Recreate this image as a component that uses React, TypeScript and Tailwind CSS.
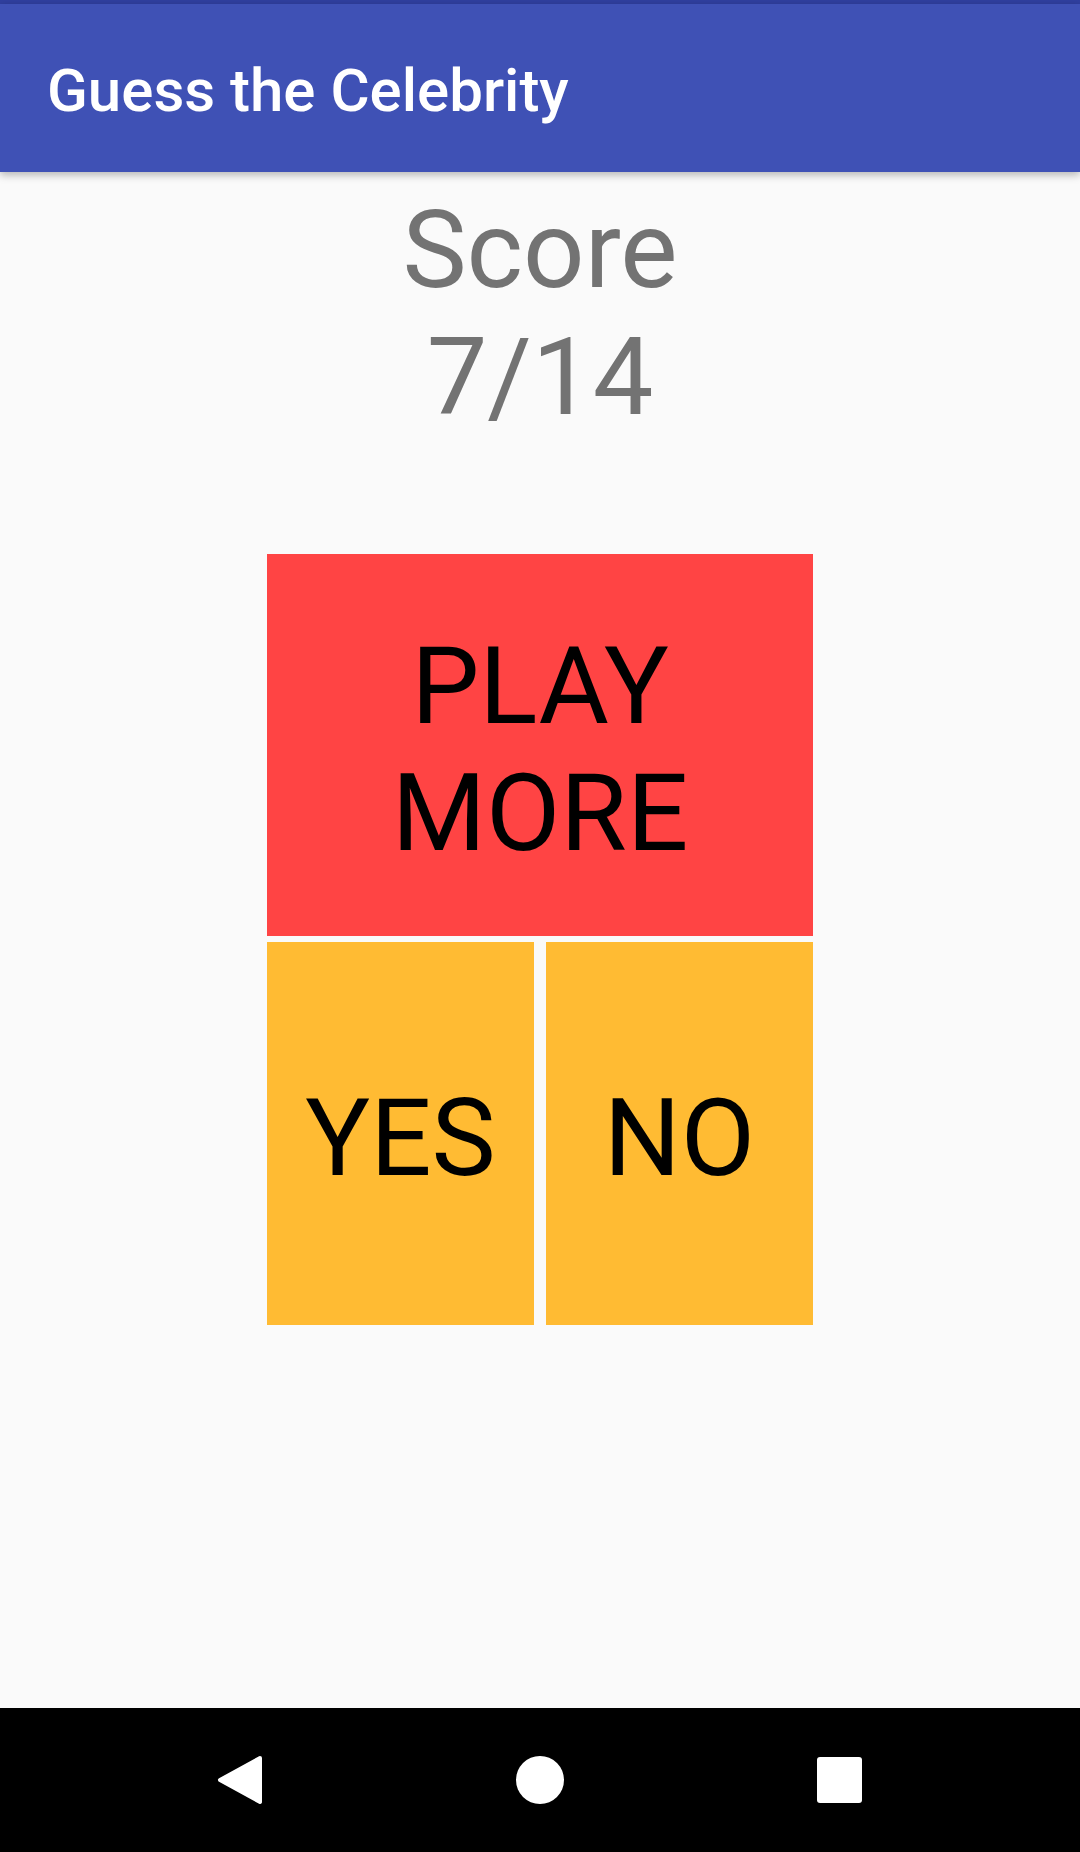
import React from "react";

export default function App() {
  return (
    <div
      className="w-[1080px] h-[1852px] flex flex-col bg-[#fafafa] overflow-hidden"
      style={{ fontFamily: "Roboto, 'Noto Sans', sans-serif" }}
    >
      <div className="h-[4px] bg-[#303f9f]" />
      <header className="relative z-10 h-[168px] bg-[#3f51b5] flex items-center pl-[47px] pt-[5px] text-white text-[60px] font-medium shadow-[0_3px_8px_rgba(0,0,0,0.28)]">
        Guess the Celebrity
      </header>
      <main className="flex-1 flex flex-col items-center">
        <div className="mt-[15px] text-center text-[108px] leading-[127px] text-[#737373]">
          Score
          <br />
          7/14
        </div>
        <div className="mt-[113px] w-[546px] flex flex-col gap-[6px]">
          <button className="h-[382px] bg-[#ff4444] text-black text-[108px] leading-[127px] flex items-center justify-center pt-[10px] text-center">
            PLAY
            <br />
            MORE
          </button>
          <div className="flex gap-[12px] h-[383px]">
            <button className="flex-1 bg-[#ffbb33] text-black text-[108px] leading-[127px] flex items-center justify-center pt-[10px]">
              YES
            </button>
            <button className="flex-1 bg-[#ffbb33] text-black text-[108px] leading-[127px] flex items-center justify-center pt-[10px]">
              NO
            </button>
          </div>
        </div>
      </main>
      <nav className="h-[144px] bg-black relative">
        <svg width="1080" height="144" viewBox="0 1708 1080 144" className="block">
          <polygon
            points="260,1758 220,1780 260,1802"
            fill="#fff"
            stroke="#fff"
            strokeWidth="4"
            strokeLinejoin="round"
          />
          <circle cx="540" cy="1780" r="24" fill="#fff" />
          <rect x="817" y="1757" width="45" height="46" rx="3" fill="#fff" />
        </svg>
      </nav>
    </div>
  );
}
